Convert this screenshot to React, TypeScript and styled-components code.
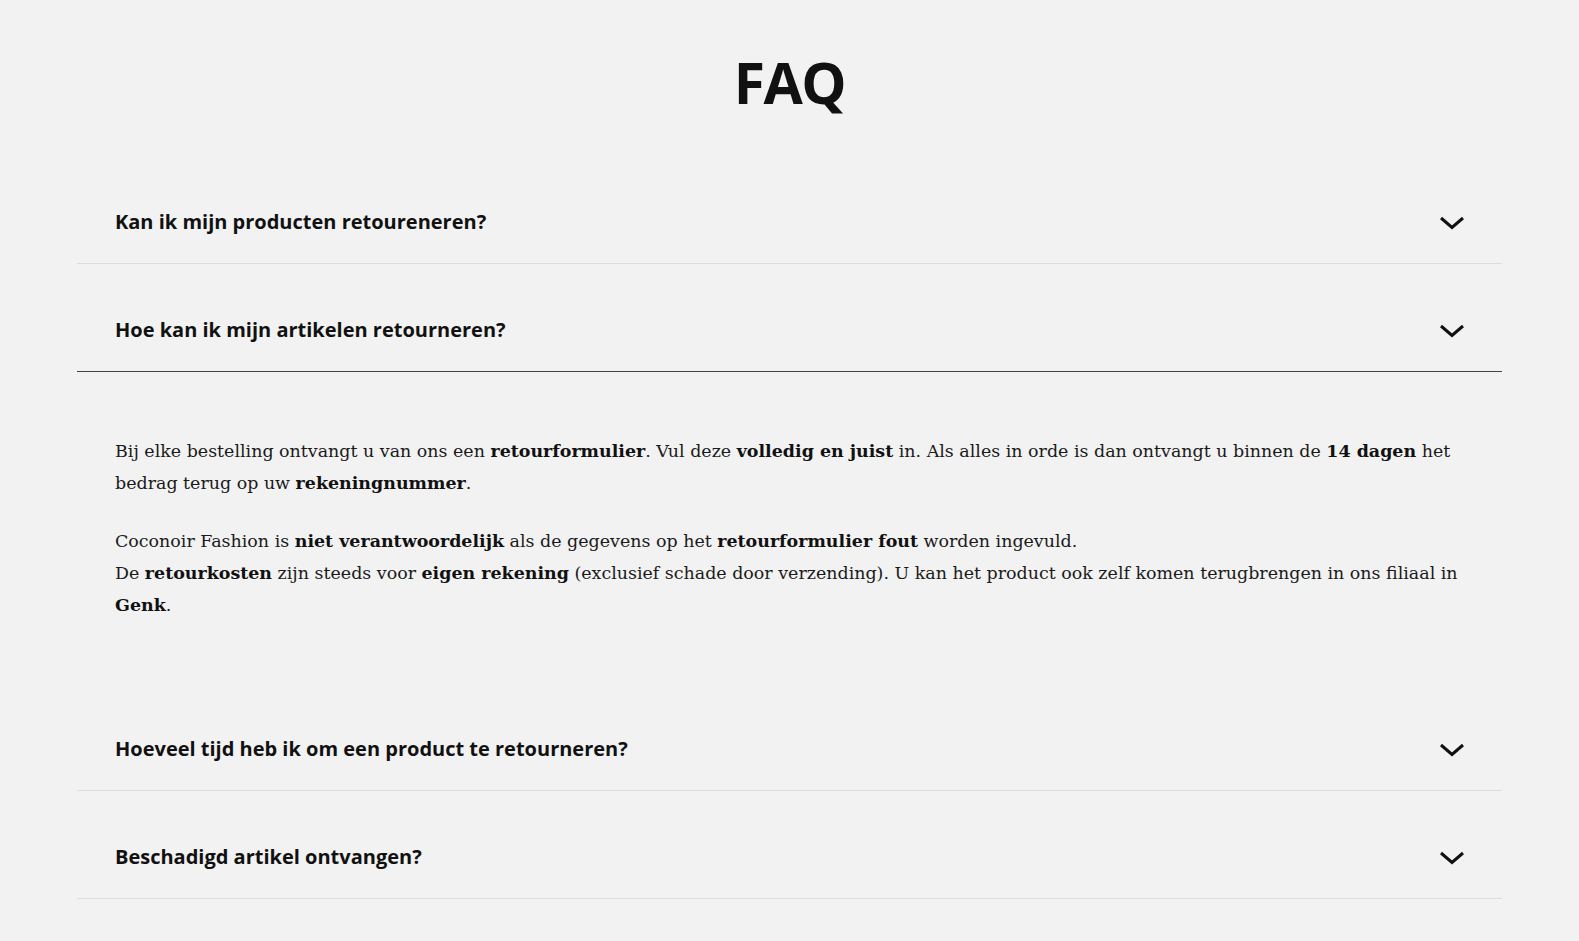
import React, { FC, useState } from "react";
import styled, { createGlobalStyle } from "styled-components";

const GlobalStyle = createGlobalStyle`
  html, body {
    margin: 0;
    padding: 0;
    background: #f2f2f2;
  }
`;

const StyledPage = styled.main`
  min-height: 100vh;
  background: #f2f2f2;
  padding: 46px 77px 40px;
  box-sizing: border-box;
`;

const StyledH1 = styled.h1`
  margin: 0 0 38px;
  text-align: center;
  font-family: "Open Sans", sans-serif;
  font-weight: 700;
  font-size: 57px;
  line-height: 72px;
  letter-spacing: -1.5px;
  color: #111;
`;

const StyledList = styled.section`
  display: flex;
  flex-direction: column;
`;

const StyledHeader = styled.button<{ $open: boolean }>`
  display: flex;
  align-items: center;
  justify-content: space-between;
  width: 100%;
  padding: 52px 37px 28px 38px;
  border: 0;
  border-bottom: 1px solid ${({ $open }) => ($open ? "#444" : "#dcdcdc")};
  background: transparent;
  cursor: pointer;
  text-align: left;
  font-family: "Open Sans", sans-serif;
  font-weight: 700;
  font-size: 20px;
  line-height: 27px;
  color: #111;
`;

const StyledChevron = styled.svg`
  flex: none;
  width: 26px;
  height: 14px;
  margin-top: 2px;
`;

const StyledPanel = styled.div`
  padding: 63px 38px 62px;
  font-family: "DejaVu Serif", Georgia, serif;
  font-size: 17.45px;
  line-height: 32px;
  color: #1a1a1a;

  p {
    margin: 0 0 26px;
  }

  p:last-child {
    margin-bottom: 0;
  }

  strong {
    font-weight: 700;
    color: #111;
  }
`;

interface FaqItem {
  id: string;
  question: string;
  answer?: React.ReactNode;
}

const items: FaqItem[] = [
  { id: "q1", question: "Kan ik mijn producten retoureneren?" },
  {
    id: "q2",
    question: "Hoe kan ik mijn artikelen retourneren?",
    answer: (
      <>
        <p>
          Bij elke bestelling ontvangt u van ons een <strong>retourformulier</strong>. Vul deze{" "}
          <strong>volledig en juist</strong> in. Als alles in orde is dan ontvangt u binnen de{" "}
          <strong>14 dagen</strong> het bedrag terug op uw <strong>rekeningnummer</strong>.
        </p>
        <p>
          Coconoir Fashion is <strong>niet verantwoordelijk</strong> als de gegevens op het{" "}
          <strong>retourformulier fout</strong> worden ingevuld.
          <br />
          De <strong>retourkosten</strong> zijn steeds voor <strong>eigen rekening</strong> (exclusief
          schade door verzending). U kan het product ook zelf komen terugbrengen in ons filiaal in{" "}
          <strong>Genk</strong>.
        </p>
      </>
    ),
  },
  { id: "q3", question: "Hoeveel tijd heb ik om een product te retourneren?" },
  { id: "q4", question: "Beschadigd artikel ontvangen?" },
];

const App: FC = () => {
  const [openId, setOpenId] = useState<string | null>("q2");

  const handleToggle = (id: string) => {
    setOpenId((prev) => (prev === id ? null : id));
  };

  return (
    <>
      <GlobalStyle />
      <StyledPage>
        <StyledH1>FAQ</StyledH1>
        <StyledList>
          {items.map((item) => {
            const open = openId === item.id;
            return (
              <div key={item.id}>
                <StyledHeader $open={open} onClick={() => handleToggle(item.id)}>
                  <span>{item.question}</span>
                  <StyledChevron viewBox="0 0 26 14">
                    <polyline
                      points="2,2 13,11.5 24,2"
                      fill="none"
                      stroke="#111"
                      strokeWidth="3"
                    />
                  </StyledChevron>
                </StyledHeader>
                {open && item.answer && <StyledPanel>{item.answer}</StyledPanel>}
              </div>
            );
          })}
        </StyledList>
      </StyledPage>
    </>
  );
};

export default App;
